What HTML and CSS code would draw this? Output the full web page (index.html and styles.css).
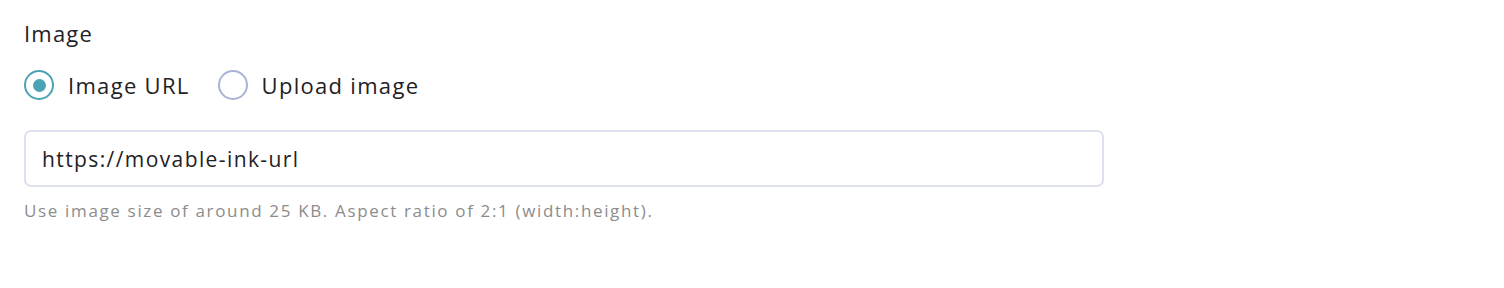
FILE: index.html
```html
<!DOCTYPE html>
<html>
<head>
<meta charset="utf-8">
<link rel="stylesheet" href="styles.css">
</head>
<body>
<div class="field">
  <div class="label">Image</div>
  <div class="radios">
    <label class="radio">
      <span class="dot checked"></span>
      <span class="radio-text">Image URL</span>
    </label>
    <label class="radio">
      <span class="dot"></span>
      <span class="radio-text">Upload image</span>
    </label>
  </div>
  <div class="input">https://movable-ink-url</div>
  <div class="help">Use image size of around 25 KB. Aspect ratio of 2:1 (width:height).</div>
</div>
</body>
</html>
```
FILE: styles.css
```css
html, body {
  margin: 0;
  background: #fff;
}
body {
  font-family: "Open Sans", "Liberation Sans", sans-serif;
  color: #1f2124;
}
.field {
  padding: 19px 24px 0 24px;
  width: 1080px;
}
.label {
  font-size: 22px;
  line-height: 28px;
  letter-spacing: 1.2px;
}
.radios {
  display: flex;
  align-items: center;
  gap: 28px;
  margin-top: 23px;
}
.radio {
  display: flex;
  align-items: center;
  gap: 14px;
  font-size: 22px;
  line-height: 30px;
  letter-spacing: 1.3px;
}
.dot {
  box-sizing: border-box;
  width: 30px;
  height: 30px;
  border-radius: 50%;
  border: 2px solid #a9b4d4;
  display: flex;
  align-items: center;
  justify-content: center;
}
.dot.checked {
  border-color: #4aa3b5;
}
.dot.checked::after {
  content: "";
  width: 13px;
  height: 13px;
  border-radius: 50%;
  background: #4aa3b5;
}
.input {
  box-sizing: border-box;
  margin-top: 30px;
  height: 57px;
  border: 2px solid #dde1ed;
  border-radius: 7px;
  padding: 0 16px;
  display: flex;
  align-items: center;
  font-size: 21px;
  letter-spacing: 1.4px;
}
.help {
  margin-top: 13px;
  font-size: 17px;
  line-height: 22px;
  letter-spacing: 1.65px;
  color: #8c8c8c;
}
```
